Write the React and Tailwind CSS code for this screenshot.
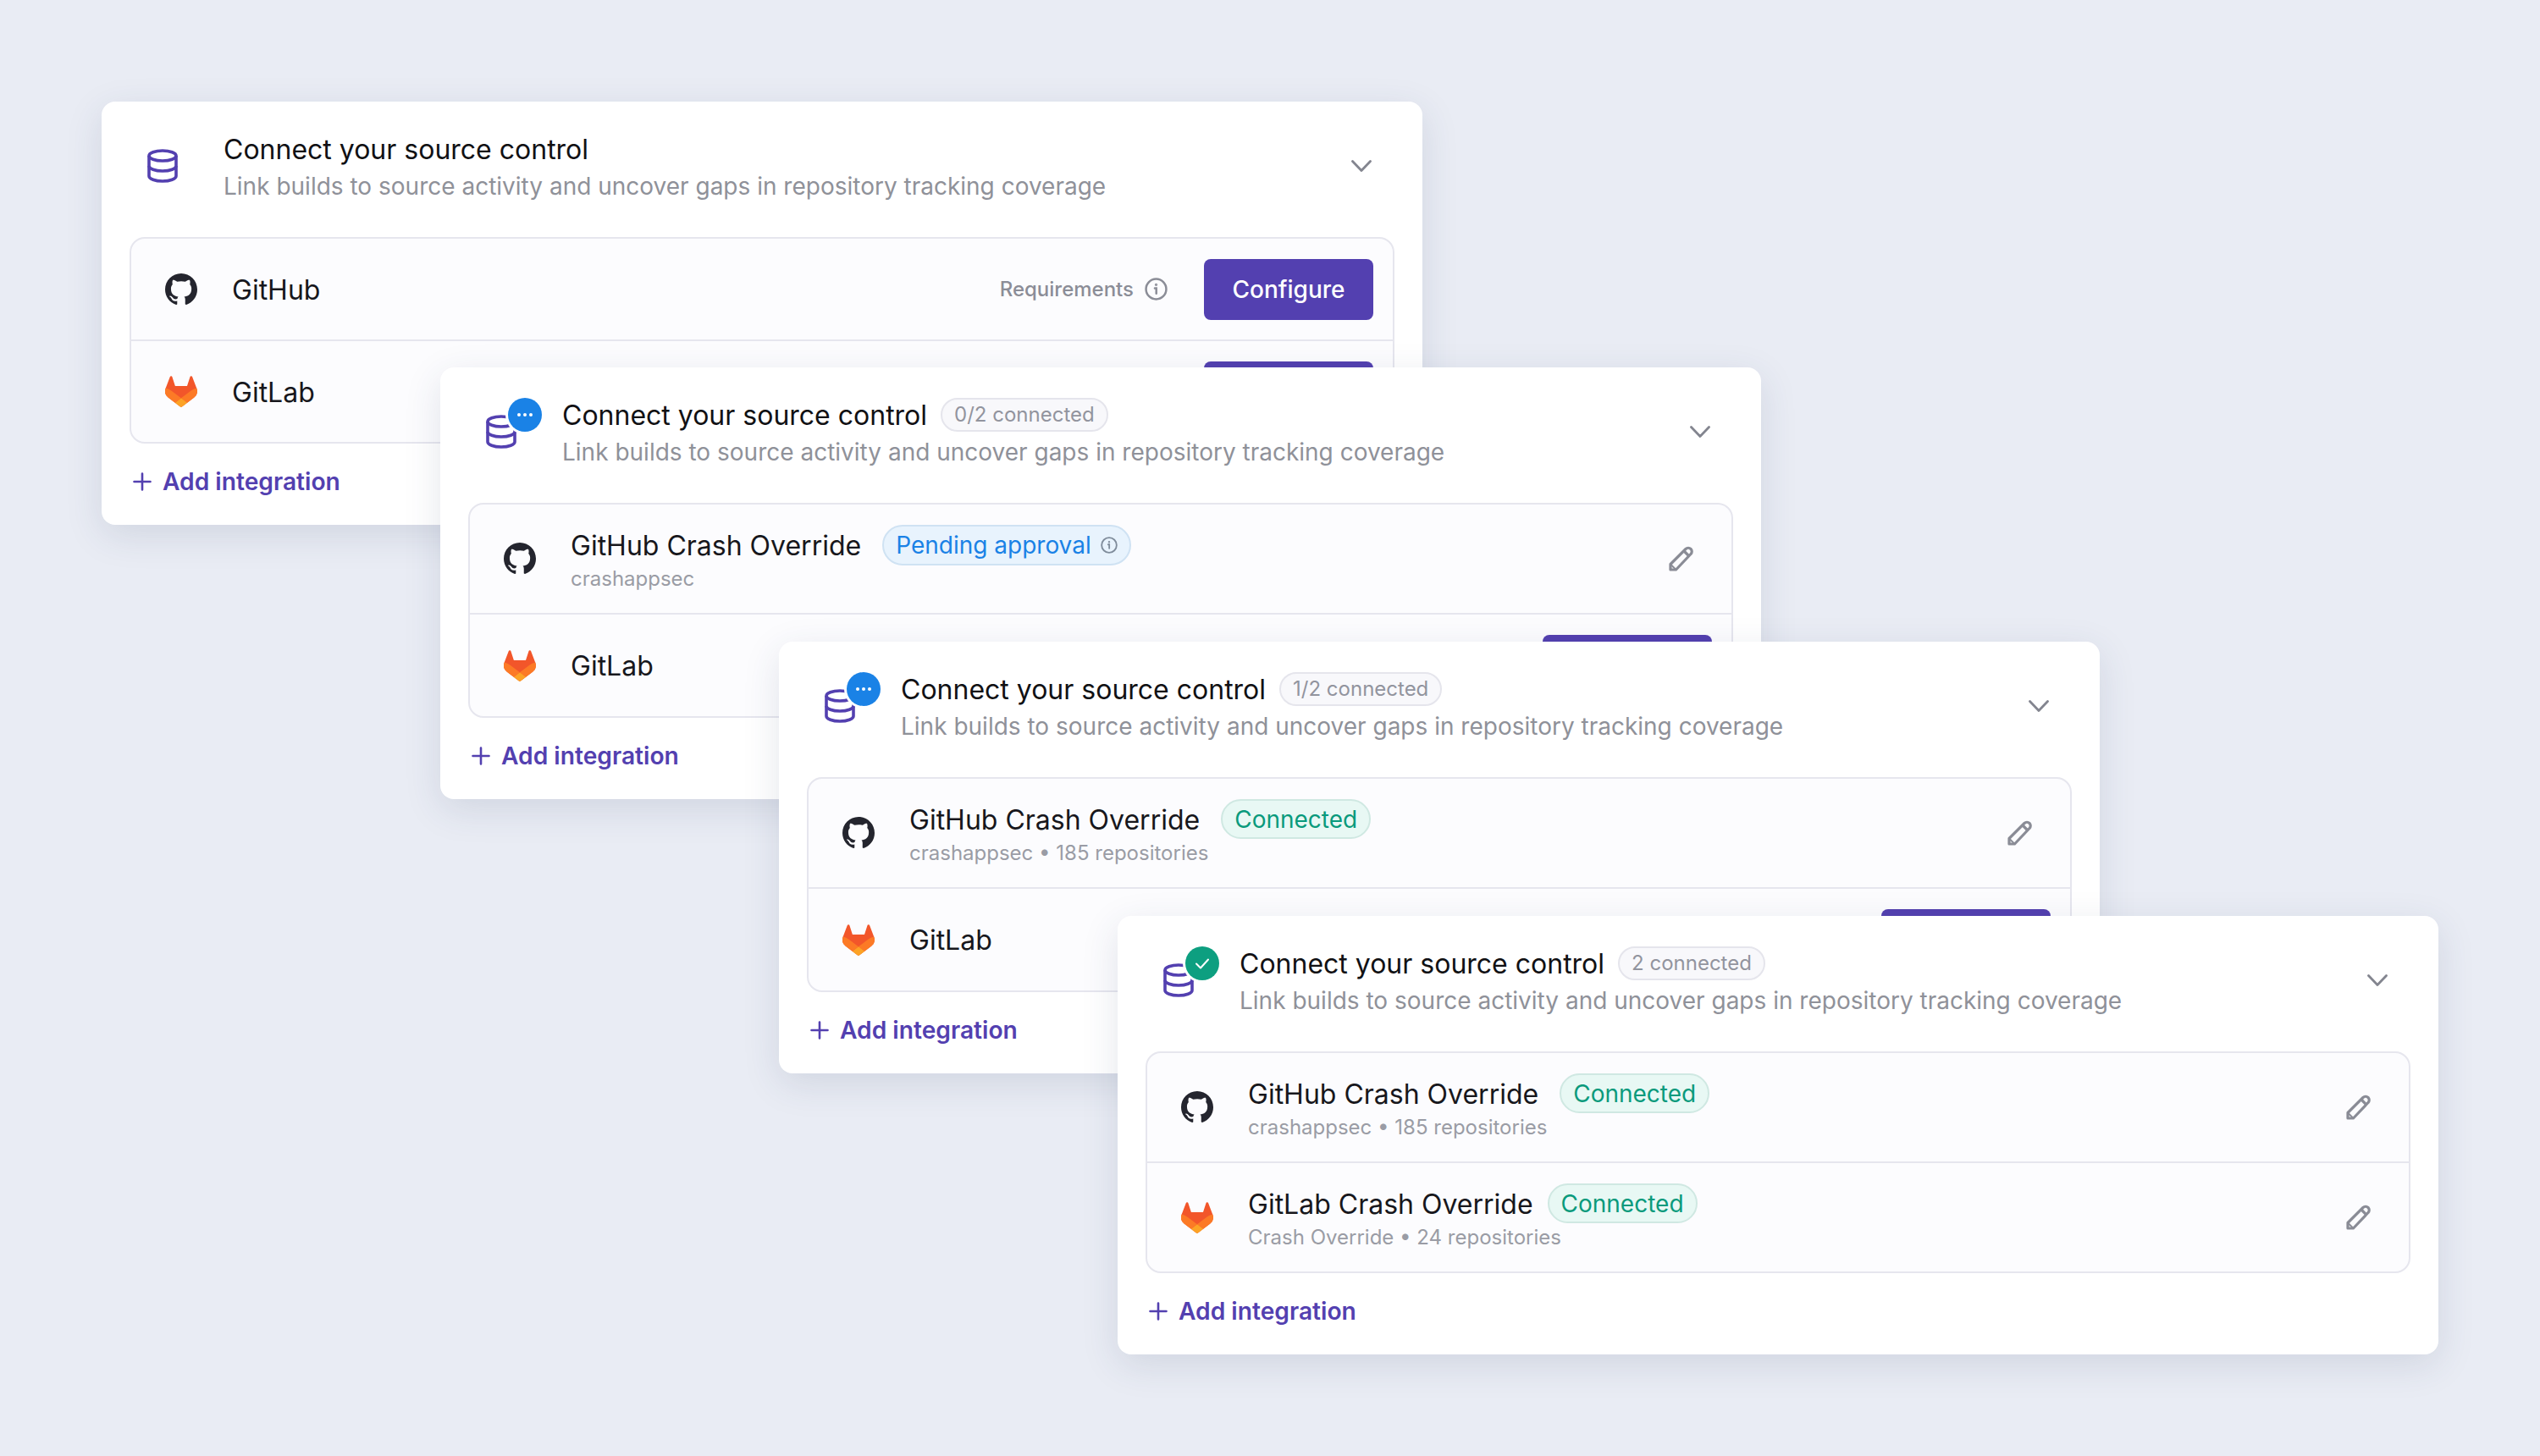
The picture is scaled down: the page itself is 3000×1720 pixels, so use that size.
import React from "react";

const GithubLogo = () => (
  <svg viewBox="0 0 16 16" className="w-[38px] h-[38px] shrink-0" fill="#24252e">
    <path d="M8 0C3.58 0 0 3.58 0 8c0 3.54 2.29 6.53 5.47 7.59.4.07.55-.17.55-.38 0-.19-.01-.82-.01-1.49-2.01.37-2.53-.49-2.69-.94-.09-.23-.48-.94-.82-1.13-.28-.15-.68-.52-.01-.53.63-.01 1.08.58 1.23.82.72 1.21 1.87.87 2.33.66.07-.52.28-.87.51-1.07-1.78-.2-3.64-.89-3.64-3.95 0-.87.31-1.59.82-2.15-.08-.2-.36-1.02.08-2.12 0 0 .67-.21 2.2.82.64-.18 1.32-.27 2-.27.68 0 1.36.09 2 .27 1.53-1.04 2.2-.82 2.2-.82.44 1.1.16 1.92.08 2.12.51.56.82 1.27.82 2.15 0 3.07-1.87 3.75-3.65 3.95.29.25.54.73.54 1.48 0 1.07-.01 1.93-.01 2.2 0 .21.15.46.55.38A8.013 8.013 0 0016 8c0-4.42-3.58-8-8-8z" />
  </svg>
);

const GitlabLogo = () => (
  <svg viewBox="0 0 25 24" className="w-[38px] h-[37px] shrink-0">
    <path fill="#F2562A" d="m24.507 9.5-.034-.09L21.082.562a.896.896 0 0 0-1.694.091l-2.29 7.01H7.825L5.535.653a.898.898 0 0 0-1.694-.09L.451 9.411.416 9.5a6.297 6.297 0 0 0 2.09 7.278l.012.01.03.022 5.16 3.867 2.56 1.935 1.554 1.176a1.051 1.051 0 0 0 1.268 0l1.555-1.176 2.56-1.935 5.197-3.89.014-.01A6.297 6.297 0 0 0 24.507 9.5Z" />
    <path fill="#FC7A26" d="m24.507 9.5-.034-.09a11.44 11.44 0 0 0-4.56 2.051l-7.447 5.632 4.742 3.584 5.197-3.89.014-.01A6.297 6.297 0 0 0 24.507 9.5Z" />
    <path fill="#FCA326" d="m7.707 20.677 2.56 1.935 1.555 1.176a1.051 1.051 0 0 0 1.268 0l1.555-1.176 2.56-1.935-4.743-3.584-4.755 3.584Z" />
    <path fill="#FC7A26" d="M5.01 11.461a11.43 11.43 0 0 0-4.56-2.05L.416 9.5a6.297 6.297 0 0 0 2.09 7.278l.012.01.03.022 5.16 3.867 4.745-3.584-7.444-5.632Z" />
  </svg>
);

const InfoIcon = ({ className, color }) => (
  <svg viewBox="0 0 26 26" className={className} fill="none" stroke={color} strokeWidth="2.4" strokeLinecap="round">
    <circle cx="13" cy="13" r="11.5" />
    <path d="M11.5 12h1.7v6" />
    <circle cx="13" cy="8" r="0.6" strokeWidth="2" />
  </svg>
);

const PencilIcon = () => (
  <svg viewBox="0 0 30 30" className="w-[30px] h-[30px]" fill="none" stroke="#8a8c96" strokeWidth="3.2" strokeLinejoin="round">
    <path d="M2 28v-6.5L20 3.5a4.2 4.2 0 0 1 6 6L8.5 28z" />
    <path d="M18 6l6 6" />
    <path d="M2.5 22l5.5 5.5" strokeWidth="2" />
  </svg>
);

const Chevron = () => (
  <svg viewBox="0 0 24 14" className="w-[24px] h-[14px]" fill="none" stroke="#83858f" strokeWidth="2.8" strokeLinecap="round" strokeLinejoin="round">
    <path d="M1.5 1.5L12 12.5L22.5 1.5" />
  </svg>
);

const DbIcon = () => (
  <svg viewBox="0 0 36 40" className="w-[36px] h-[40px]" fill="none" stroke="#5340b0" strokeWidth="3.6">
    <ellipse cx="18" cy="8" rx="16" ry="6" />
    <path d="M2 8v24c0 3.3 7.2 6 16 6s16-2.7 16-6V8" />
    <path d="M2 20c0 3.3 7.2 6 16 6s16-2.7 16-6" />
  </svg>
);

function StatusBadge({ status }) {
  if (!status) return null;
  const color = status === "done" ? "bg-[#0d9f80]" : "bg-[#1a82e6]";
  return (
    <span className={`absolute left-[26px] top-[-20px] w-[40px] h-[40px] rounded-full ${color} ring-[3px] ring-white flex items-center justify-center`}>
      {status === "done" ? (
        <svg viewBox="0 0 20 20" className="w-[20px] h-[20px]" fill="none" stroke="white" strokeWidth="2" strokeLinecap="round" strokeLinejoin="round">
          <path d="M3 10.5l5 5 9-10" />
        </svg>
      ) : (
        <span className="flex gap-[3px]">
          <span className="w-[4px] h-[4px] rounded-full bg-white" />
          <span className="w-[4px] h-[4px] rounded-full bg-white" />
          <span className="w-[4px] h-[4px] rounded-full bg-white" />
        </span>
      )}
    </span>
  );
}

function IntegrationRow({ logo, name, sub, pill, configure, divider, height, pillGap = "gap-[25px]" }) {
  return (
    <div className={`flex items-center pl-[40px] ${configure ? "pr-[23px]" : "pr-[44px]"} ${height} ${divider ? "border-t-2 border-[#e6e6ee]" : ""}`}>
      {logo === "github" ? <GithubLogo /> : <GitlabLogo />}
      <div className="ml-[41px] flex flex-col">
        <div className={`flex items-center ${pillGap} h-[47px]`}>
          <span className="pt-[2px] text-[32px] text-[#17171c]">{name}</span>
          {pill === "connected" && (
            <span className="h-[47px] px-[14px] rounded-full border-2 border-[#cfe8e2] bg-[#e8f8f4] text-[#0a9a7c] text-[28px] flex items-center">
              Connected
            </span>
          )}
          {pill === "pending" && (
            <span className="h-[48px] px-[14px] rounded-full border-2 border-[#cfe2f3] bg-[#e8f3fd] text-[#1a82e6] text-[28px] flex items-center gap-[11px]">
              Pending approval
              <InfoIcon className="w-[20px] h-[20px]" color="#7f8c9b" />
            </span>
          )}
        </div>
        {sub && <span className="h-[33px] leading-[33px] text-[24px] text-[#9a9ca5]">{sub}</span>}
      </div>
      <div className="ml-auto flex items-center">
        {configure ? (
          <>
            <span className="text-[24px] font-medium text-[#8b8d97]">Requirements</span>
            <InfoIcon className="ml-[13px] w-[27px] h-[27px]" color="#8b8d97" />
            <button className="ml-[43px] w-[200px] h-[72px] rounded-[8px] bg-[#5340b0] text-white text-[28px] font-medium">
              Configure
            </button>
          </>
        ) : (
          <PencilIcon />
        )}
      </div>
    </div>
  );
}

function ConnectCard({ position, status, count, rows }) {
  return (
    <section className={`absolute w-[1560px] bg-white rounded-[16px] shadow-[0_12px_44px_rgba(50,60,100,0.13)] ${position}`}>
      {/* header */}
      <div className="flex items-start h-[160px] pt-[34px] pl-[54px] pr-[60px]">
        <div className="relative mt-[22px] mr-[54px] shrink-0">
          <DbIcon />
          <StatusBadge status={status} />
        </div>
        <div>
          <div className="flex items-center gap-[16px] h-[44px]">
            <h2 className="pt-[2px] text-[32px] leading-[44px] text-[#111114]">Connect your source control</h2>
            {count && (
              <span className="h-[40px] px-[14px] rounded-full border-2 border-[#e5e5ec] bg-[#f8f8fb] text-[#92949e] text-[24px] flex items-center">
                {count}
              </span>
            )}
          </div>
          <p className="text-[28px] leading-[44px] text-[#8f9199] whitespace-nowrap">
            Link builds to source activity and uncover gaps in repository tracking coverage
          </p>
        </div>
        <div className="ml-auto mt-[35px]">
          <Chevron />
        </div>
      </div>

      {/* integrations */}
      <div className="mx-[33px] rounded-[18px] border-2 border-[#e6e6ee] bg-[#fcfcfe]">
        {rows.map((row, index) => (
          <IntegrationRow key={index} divider={index > 0} {...row} />
        ))}
      </div>

      {/* footer */}
      <div className="flex items-center h-[96px] pb-[6px] pl-[37px]">
        <svg viewBox="0 0 22 22" className="w-[22px] h-[22px]" fill="none" stroke="#5340b0" strokeWidth="2.6" strokeLinecap="round">
          <path d="M11 1.5v19M1.5 11h19" />
        </svg>
        <span className="ml-[13px] text-[28.2px] font-semibold text-[#5340b0]">Add integration</span>
      </div>
    </section>
  );
}

const GITLAB_TODO = { logo: "gitlab", name: "GitLab", configure: true, height: "h-[122px]" };

export default function App() {
  return (
    <div className="relative w-[3000px] h-[1720px] overflow-hidden bg-[#e9ecf4] font-['Inter',sans-serif]">
      <ConnectCard
        position="left-[120px] top-[120px]"
        rows={[
          { logo: "github", name: "GitHub", configure: true, height: "h-[119px]" },
          { ...GITLAB_TODO, height: "h-[121px]" },
        ]}
      />
      <ConnectCard
        position="left-[520px] top-[434px]"
        status="pending"
        count="0/2 connected"
        rows={[
          { logo: "github", name: "GitHub Crash Override", sub: "crashappsec", pill: "pending", height: "h-[128px]" },
          GITLAB_TODO,
        ]}
      />
      <ConnectCard
        position="left-[920px] top-[758px]"
        status="pending"
        count="1/2 connected"
        rows={[
          { logo: "github", name: "GitHub Crash Override", sub: "crashappsec • 185 repositories", pill: "connected", height: "h-[128px]" },
          GITLAB_TODO,
        ]}
      />
      <ConnectCard
        position="left-[1320px] top-[1082px]"
        status="done"
        count="2 connected"
        rows={[
          { logo: "github", name: "GitHub Crash Override", sub: "crashappsec • 185 repositories", pill: "connected", height: "h-[128px]" },
          { logo: "gitlab", name: "GitLab Crash Override", sub: "Crash Override • 24 repositories", pill: "connected", pillGap: "gap-[17px]", height: "h-[130px]" },
        ]}
      />
    </div>
  );
}
